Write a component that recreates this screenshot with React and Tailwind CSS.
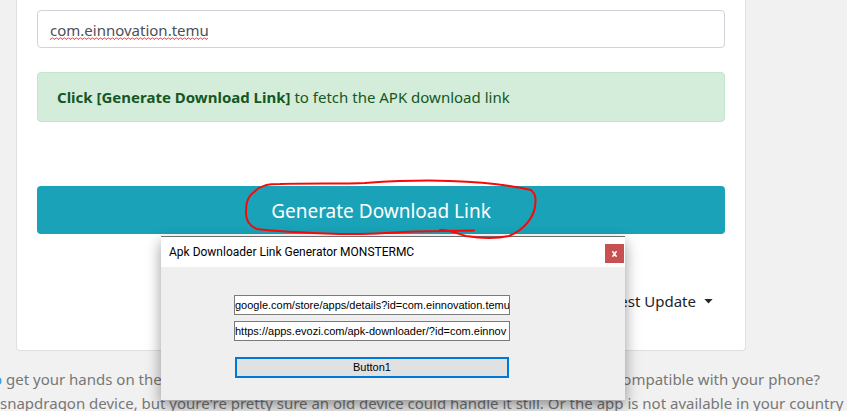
function SpellingMark() {
  return (
    <svg className="pointer-events-none absolute bottom-2 left-[13px]" width="158" height="3" fill="none" stroke="#ff2a2a" aria-hidden="true">
      <defs>
        <pattern id="squiggle" width="4" height="3" patternUnits="userSpaceOnUse">
          <path d="M0 2.300L1 2.200L2.500 0.700L4 2.300" />
        </pattern>
      </defs>
      <rect width="158" height="3" fill="url(#squiggle)" stroke="none" />
    </svg>
  );
}

function DownloadCard() {
  return (
    <main className="mr-[101px] ml-4 rounded-b border border-t-0 border-[#dfdfdf] bg-white px-5 pt-2.5">
      <div className="relative">
        <input
          type="text"
          aria-label="Package name"
          defaultValue="com.einnovation.temu"
          spellCheck={false}
          className="block h-[38px] w-full rounded border border-[#ced4da] bg-white px-3 pt-0.5 text-[15px] text-[#495057] outline-none"
        />
        <SpellingMark />
      </div>
      <div
        role="alert"
        className="mt-6 flex h-[50px] items-center rounded border border-[#c3e6cb] bg-[#d4edda] px-[19px] text-[15px] whitespace-pre text-[#155724]"
      >
        <p>
          <strong className="font-bold">Click [Generate Download Link]</strong> to fetch the APK download link
        </p>
      </div>
      <button type="button" className="mt-16 block h-12 w-full rounded bg-[#19a2b8] pt-0.5 text-[19px] text-white">
        Generate Download Link
      </button>
      <div className="flex h-[116px] items-center justify-end pt-[18px] pr-3">
        <button type="button" className="flex items-center gap-2 text-[15px] text-[#212529]">
          Latest Update
          <svg width="9" height="5" viewBox="0 0 9 5" fill="currentColor" aria-hidden="true">
            <path d="M0.4 0h8.2L4.5 4.5z" />
          </svg>
        </button>
      </div>
    </main>
  );
}

function GeneratorWindow() {
  return (
    <section
      aria-label="Apk Downloader Link Generator MONSTERMC"
      className="absolute top-[236px] left-[161px] h-[164px] w-[464px] border-t border-[#6f6f6f] bg-[#efefef] text-black shadow-[0_6px_14px_0_rgba(0,0,0,0.4)]"
    >
      <header className="flex h-[30px] items-center justify-between bg-white pr-px pl-2">
        <h1 className="font-[Roboto,'Segoe_UI',sans-serif] text-xs">Apk Downloader Link Generator MONSTERMC</h1>
        <button
          type="button"
          aria-label="Close"
          className="mt-[3px] flex h-[19px] w-[19px] items-center justify-center bg-[#c75050] text-white"
        >
          <svg width="5" height="6" viewBox="0 0 5 6" fill="none" stroke="currentColor" strokeWidth="1.6" aria-hidden="true">
            <path d="M0.4 0.3l4.2 5.4M4.6 0.3L0.4 5.7" />
          </svg>
        </button>
      </header>
      <form className="ml-[73px] flex w-[276px] flex-col gap-1.5 pt-7 font-['Liberation_Sans',Arial,sans-serif] text-[11px]">
        <input
          type="text"
          aria-label="Store link"
          defaultValue="google.com/store/apps/details?id=com.einnovation.temu"
          spellCheck={false}
          className="h-5 border border-[#7a7a7a] bg-white px-0 outline-none"
        />
        <input
          type="text"
          aria-label="Downloader link"
          defaultValue="https://apps.evozi.com/apk-downloader/?id=com.einnov"
          spellCheck={false}
          className="h-5 border border-[#7a7a7a] bg-white px-0 outline-none"
        />
        <button type="button" className="mx-px mt-2.5 h-[21px] border-2 border-[#0078d7] bg-[#e1e1e1]">
          Button1
        </button>
      </form>
    </section>
  );
}

function RedCircle() {
  return (
    <svg
      className="pointer-events-none absolute top-[175px] left-[240px]"
      width="304"
      height="68"
      viewBox="240 175 304 68"
      fill="none"
      stroke="#f80808"
      strokeWidth="2"
      strokeLinecap="round"
      strokeLinejoin="round"
      aria-hidden="true"
    >
      <path d="M474 230.500C455 231 435 231 415 231.500C390 233 365 234.500 340 234C310 233 280 232 257 229C249 226 246 220 246 213C246 204 247 197 254 192C261 185 268 184 280 184C310 183 340 184 365 183C395 181 425 180 450 181C480 182 510 185 531 190C536 194 536 199 535 207C533 218 524 230 509 236C496 239 478 238 466 236C458 234 449 229 440 230" />
    </svg>
  );
}

export default function App() {
  return (
    <div className="relative h-screen overflow-hidden bg-[#f1f1f1] font-['Noto_Sans','Segoe_UI',sans-serif]">
      <DownloadCard />
      <div className="mt-4 text-[15px] leading-6 whitespace-nowrap text-[#777]">
        <p className="mr-[27px] -ml-[7px] flex justify-between">
          <span>
            <a href="#help" className="text-[#3498db]">o</a> get your hands on the
          </span>
          <span>compatible with your phone?</span>
        </p>
        <p>
          snapdragon device, but youre're pretty sure an old device could handle it still. Or the app is not available in your country
        </p>
      </div>
      <GeneratorWindow />
      <RedCircle />
    </div>
  );
}
